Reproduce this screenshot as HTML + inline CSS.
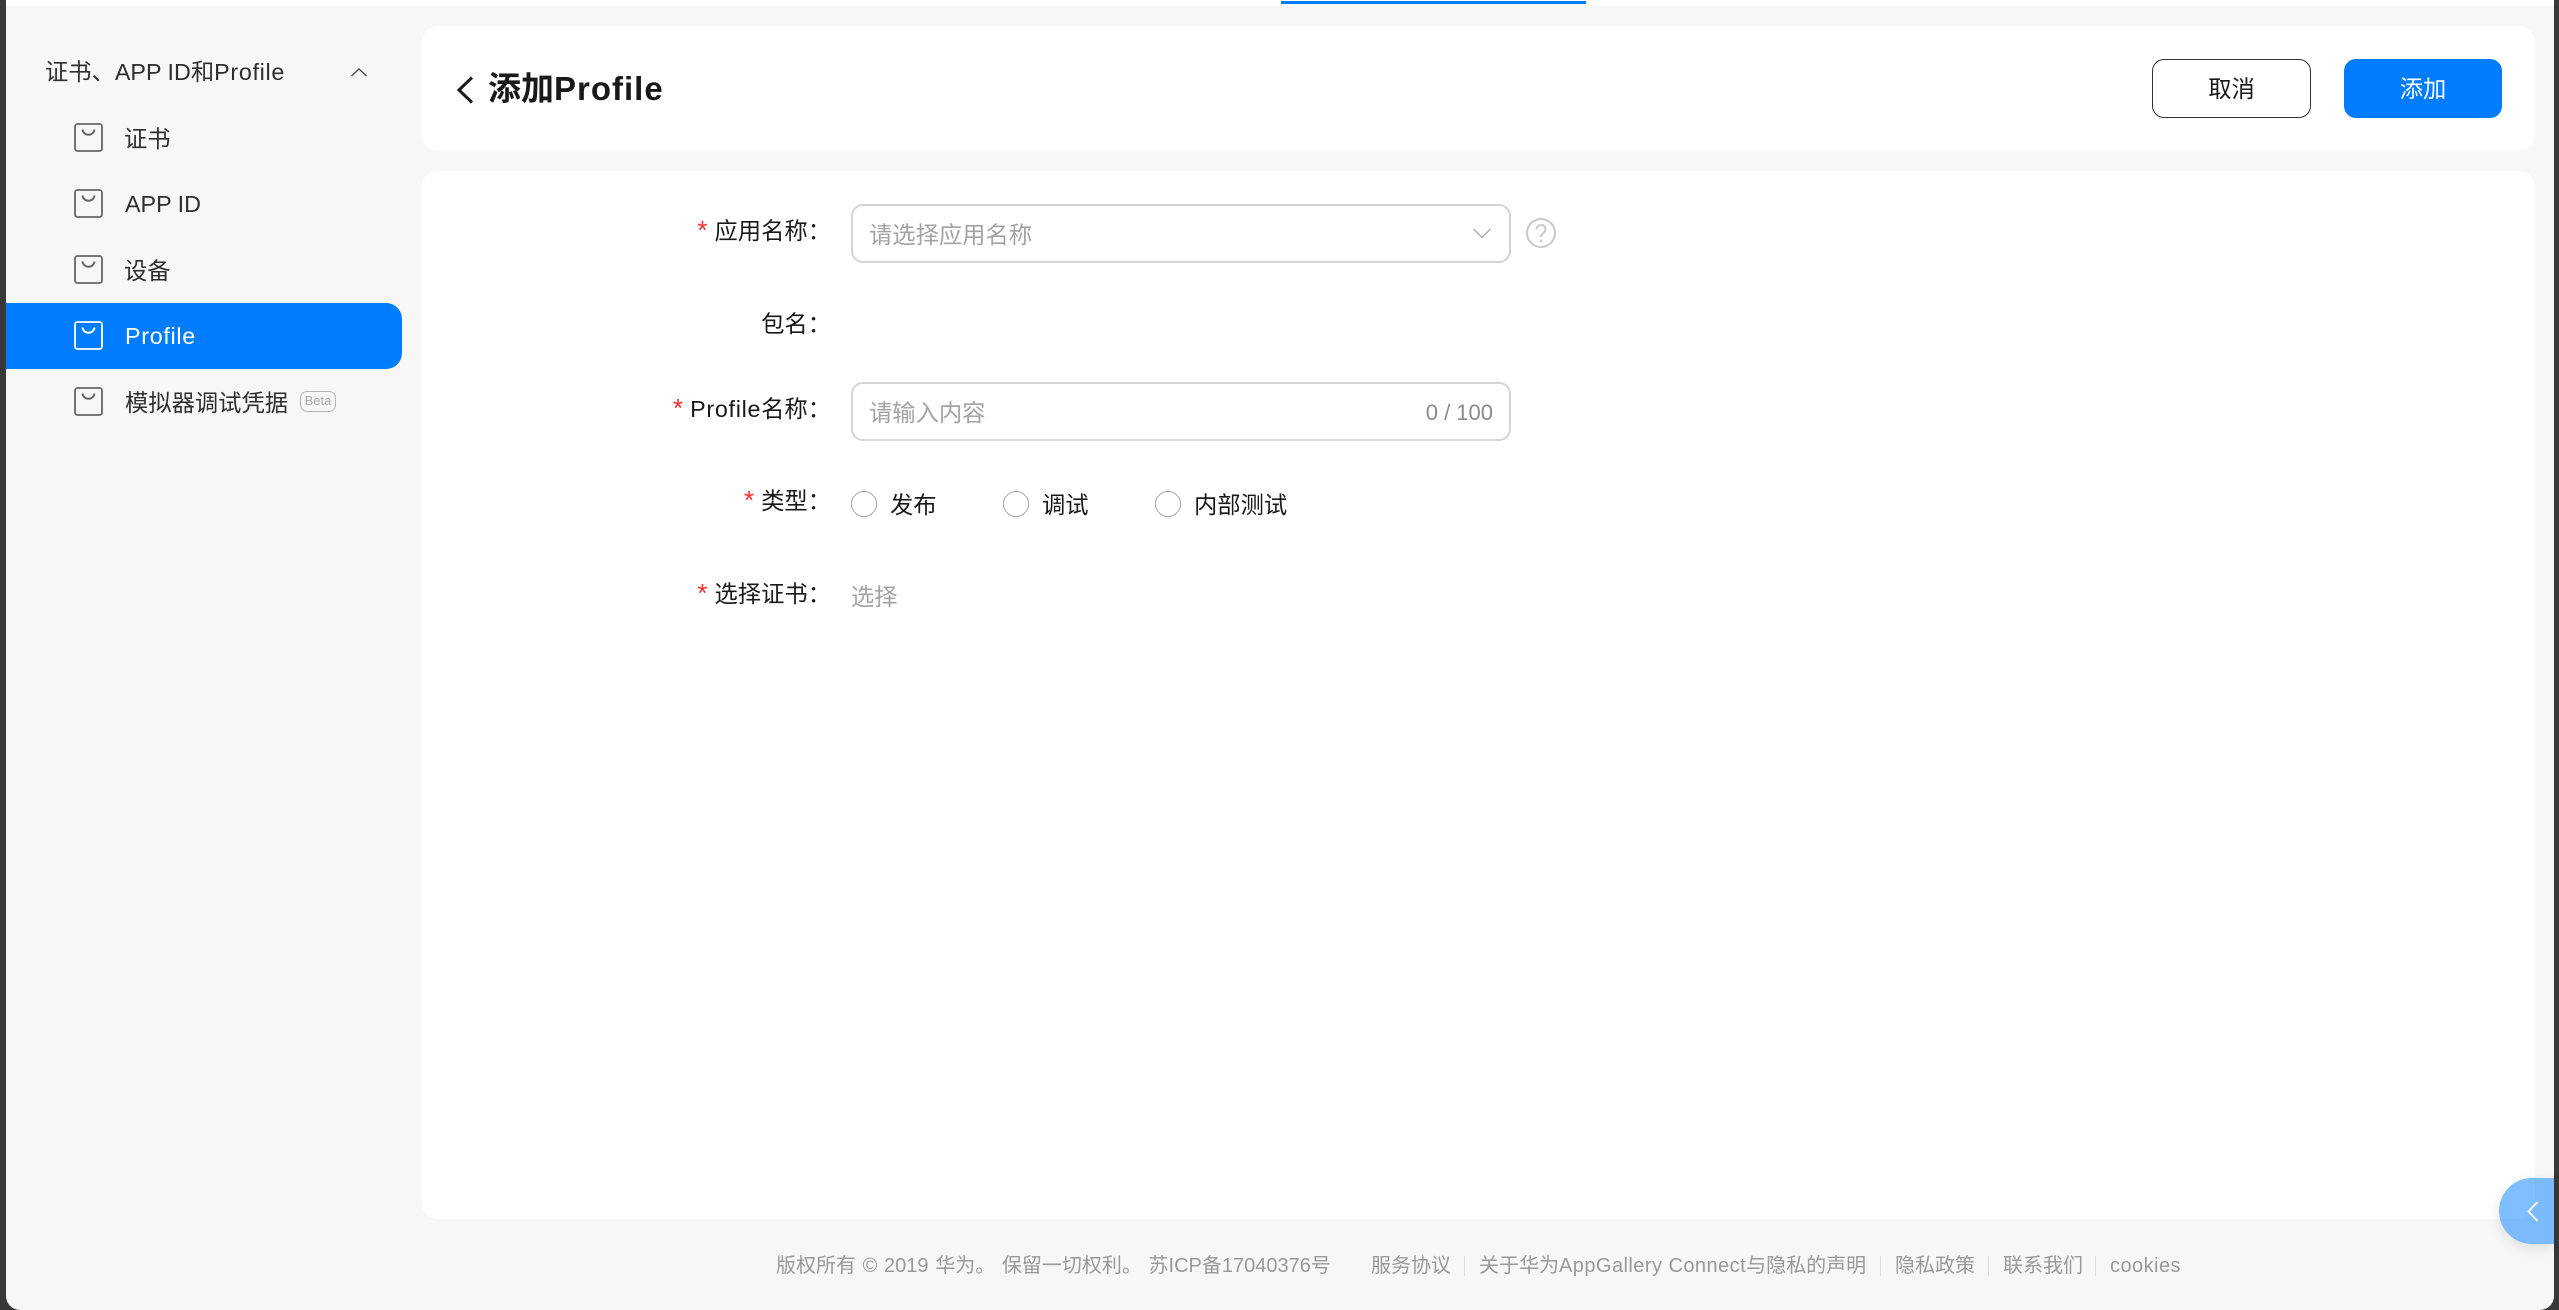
<!DOCTYPE html>
<html lang="zh-CN">
<head>
<meta charset="utf-8">
<title>添加Profile</title>
<style>
html,body{margin:0;padding:0;width:2559px;height:1310px;overflow:hidden;background:#fff}
body{position:relative;font-family:"Liberation Sans","Noto Sans CJK SC",sans-serif;color:#191919}
.a{position:absolute;white-space:nowrap}
.t{position:absolute;white-space:nowrap;font-size:23.3px;line-height:34px;height:34px}
.r{text-align:right;right:1728px}
.star{color:#fa2a2d;margin-right:7px;font-size:26px;line-height:0}
.ls{letter-spacing:.7px}
.ico{position:absolute;left:74px;width:29px;height:29px}
.radio{position:absolute;top:491px;width:26px;height:26px;box-sizing:border-box;border:1.5px solid #a6a6a6;border-radius:50%;background:#fff}
.box{position:absolute;left:851px;width:660px;box-sizing:border-box;border:2px solid #d4d4d4;border-radius:12px;background:#fff}
.ph{color:#a3a3a3}
.f{position:absolute;top:1252px;font-size:20px;line-height:28px;color:#999;white-space:nowrap}
.l{letter-spacing:.45px}
.sep{position:absolute;top:1256px;width:1px;height:20px;background:#ddd}
</style>
</head>
<body>
<div class="a" style="left:1281px;top:1px;width:305px;height:3px;background:#007dff"></div>
<div class="a" style="left:0;top:0;width:6px;height:1310px;background:#383838"></div>
<div class="a" style="left:2554px;top:0;width:5px;height:1310px;background:#383838"></div>
<div class="a" style="left:0;top:1280px;width:2559px;height:30px;background:#383838"></div>
<div class="a" style="left:6px;top:6px;width:2548px;height:1304px;background:#f7f7f7;border-radius:0 0 14px 14px"></div>

<div class="t" style="left:45px;top:55px;color:#2e2e2e">证书、APP ID和<span class="ls">Profile</span></div>
<svg class="a" style="left:349px;top:64px" width="20" height="16" viewBox="0 0 20 16"><path d="M2.5 12L10 5l7.500 7" fill="none" stroke="#555" stroke-width="1.500"/></svg>

<div class="a" style="left:6px;top:303px;width:396px;height:66px;background:#007dff;border-radius:0 16px 16px 0"></div>

<svg class="ico" style="top:123px" viewBox="0 0 29 29"><rect x="1" y="1" width="27" height="27" rx="2.500" fill="none" stroke="#666" stroke-width="1.800"/><path d="M8.500 6.500c1 7 11 7 12 0" fill="none" stroke="#666" stroke-width="2"/></svg>
<svg class="ico" style="top:189px" viewBox="0 0 29 29"><rect x="1" y="1" width="27" height="27" rx="2.500" fill="none" stroke="#666" stroke-width="1.800"/><path d="M8.500 6.500c1 7 11 7 12 0" fill="none" stroke="#666" stroke-width="2"/></svg>
<svg class="ico" style="top:255px" viewBox="0 0 29 29"><rect x="1" y="1" width="27" height="27" rx="2.500" fill="none" stroke="#666" stroke-width="1.800"/><path d="M8.500 6.500c1 7 11 7 12 0" fill="none" stroke="#666" stroke-width="2"/></svg>
<svg class="ico" style="top:321px" viewBox="0 0 29 29"><rect x="1" y="1" width="27" height="27" rx="2.500" fill="none" stroke="#fff" stroke-width="1.800"/><path d="M8.500 6.500c1 7 11 7 12 0" fill="none" stroke="#fff" stroke-width="2"/></svg>
<svg class="ico" style="top:387px" viewBox="0 0 29 29"><rect x="1" y="1" width="27" height="27" rx="2.500" fill="none" stroke="#666" stroke-width="1.800"/><path d="M8.500 6.500c1 7 11 7 12 0" fill="none" stroke="#666" stroke-width="2"/></svg>

<div class="t" style="left:124px;top:122px;color:#2e2e2e">证书</div>
<div class="t" style="left:125px;top:187px;color:#2e2e2e">APP ID</div>
<div class="t" style="left:124px;top:254px;color:#2e2e2e">设备</div>
<div class="t ls" style="left:125px;top:319px;color:#fff">Profile</div>
<div class="t" style="left:125px;top:386px;color:#2e2e2e">模拟器调试凭据</div>
<div class="a" style="left:300px;top:391px;width:36px;height:21px;box-sizing:border-box;border:1.500px solid #b5b5b5;border-radius:7px;font-size:13px;line-height:18px;text-align:center;color:#a8a8a8">Beta</div>

<div class="a" style="left:422px;top:26px;width:2113px;height:125px;background:#fff;border-radius:16px"></div>
<svg class="a" style="left:455px;top:75px" width="20" height="30" viewBox="0 0 20 30"><path d="M17 2.500L4 15l13 12.500" fill="none" stroke="#191919" stroke-width="3"/></svg>
<div class="a" style="left:488px;top:66px;font-size:33px;line-height:46px;font-weight:bold;color:#191919">添加<span style="letter-spacing:1px">Profile</span></div>

<div class="a" style="left:2152px;top:59px;width:159px;height:59px;box-sizing:border-box;border:1.500px solid #333;border-radius:12px;background:#fff;text-align:center;font-size:23.300px;line-height:58px">取消</div>
<div class="a" style="left:2344px;top:59px;width:158px;height:59px;border-radius:12px;background:#007dff;color:#fff;text-align:center;font-size:23.300px;line-height:61px">添加</div>

<div class="a" style="left:422px;top:171px;width:2113px;height:1048px;background:#fff;border-radius:16px"></div>

<div class="t r" style="top:214px"><span class="star">*</span>应用名称：</div>
<div class="t r" style="top:307px">包名：</div>
<div class="t r" style="top:392px"><span class="star">*</span><span class="ls">Profile</span>名称：</div>
<div class="t r" style="top:484px"><span class="star">*</span>类型：</div>
<div class="t r" style="top:577px"><span class="star">*</span>选择证书：</div>

<div class="box" style="top:204px;height:59px"></div>
<div class="t ph" style="left:869px;top:218px">请选择应用名称</div>
<svg class="a" style="left:1472px;top:226px" width="20" height="14" viewBox="0 0 20 14"><path d="M1.500 3l8.500 8.500L18.500 3" fill="none" stroke="#aaa" stroke-width="1.300"/></svg>
<svg class="a" style="left:1525px;top:217px" width="32" height="32" viewBox="0 0 32 32"><circle cx="16" cy="16" r="14" fill="none" stroke="#c8c8c8" stroke-width="2"/><path d="M11.500 12.500c0-6 9-6 9-.5 0 4-4.500 4-4.500 8" fill="none" stroke="#c8c8c8" stroke-width="2"/><circle cx="16" cy="24" r="1.400" fill="#c8c8c8"/></svg>

<div class="box" style="top:382px;height:59px"></div>
<div class="t ph" style="left:869px;top:396px">请输入内容</div>
<div class="t" style="right:1066px;top:396px;font-size:22px;color:#8a8a8a">0 / 100</div>

<div class="radio" style="left:851px"></div>
<div class="t" style="left:890px;top:488px">发布</div>
<div class="radio" style="left:1003px"></div>
<div class="t" style="left:1042px;top:488px">调试</div>
<div class="radio" style="left:1155px"></div>
<div class="t" style="left:1194px;top:488px">内部测试</div>

<div class="t ph" style="left:851px;top:580px">选择</div>

<div class="f" style="left:776px;word-spacing:1.1px">版权所有 © 2019 华为。 保留一切权利。 苏ICP备17040376号</div>
<div class="f" style="left:1371px">服务协议</div>
<div class="sep" style="left:1464px"></div>
<div class="f" style="left:1479px">关于华为<span class="l">AppGallery Connect</span>与隐私的声明</div>
<div class="sep" style="left:1880px"></div>
<div class="f" style="left:1895px">隐私政策</div>
<div class="sep" style="left:1988px"></div>
<div class="f" style="left:2003px">联系我们</div>
<div class="sep" style="left:2095px"></div>
<div class="f l" style="left:2110px">cookies</div>

<div class="a" style="left:2499px;top:1178px;width:55px;height:66px;border-radius:33px 0 0 33px;background:rgba(0,125,255,.5);box-shadow:0 4px 14px rgba(0,0,0,.10)"></div>
<svg class="a" style="left:2526px;top:1200px" width="14" height="23" viewBox="0 0 14 23"><path d="M11.500 2L2.500 11.500l9 9.500" fill="none" stroke="#fff" stroke-width="1.800"/></svg>
</body>
</html>
